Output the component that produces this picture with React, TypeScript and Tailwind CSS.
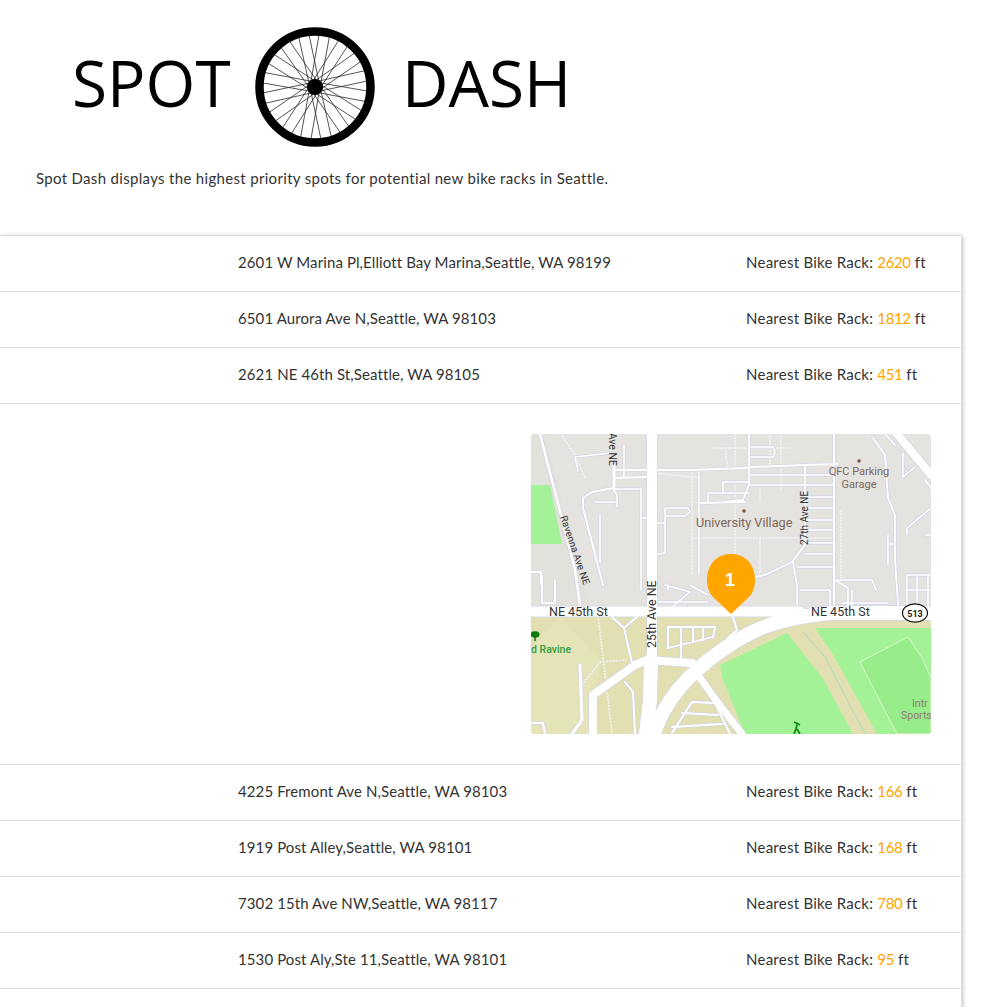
const Raleway = "font-['Lato','Liberation_Sans',sans-serif]";

type Road = [string, number];
const roads: Road[] = [
  ["M540 434L548 465L561 515L575 570L580 605", 2.5],
  ["M575 457L610 453M575 457L578 471", 1.6],
  ["M614 465V488", 3],
  ["M614 470L692 470L745 468L750 467L805 465L838 464", 1.8],
  ["M624 446V477", 1.6],
  ["M614 478L647 477", 1.8],
  ["M613 488L592 492L583 498L583 508L603 585", 2],
  ["M613 488L617 495V507M595 502H617", 1.6],
  ["M600 515V562", 1.6],
  ["M615 489H641V590", 1.6],
  ["M641 518H647M657 523H665", 1.6],
  ["M665 508H688L690 512L685 516H665M665 508V553L657 554", 1.6],
  ["M699 472V575", 1.6],
  ["M700 503L745 502L725 502L743 500L749 485V434", 1.8],
  ["M708 503V493H749M723 492V482H749", 1.6],
  ["M750 447H773L775 452L773 457H750", 1.6],
  ["M749 475H834M749 485H834", 1.6],
  ["M805 465V545L792 562L765 575L755 577", 1.8],
  ["M834 434V605", 2],
  ["M805 497H834M805 508H834M805 520H834M805 530H834M805 543H834M805 554H834", 1.4],
  ["M797 567H833M793 562L797 585V605", 1.6],
  ["M873 438L885 455L888 498L895 515L895 558L898 605", 1.8],
  ["M885 434L895 445M903 453V477L915 467M925 480L931 488", 1.6],
  ["M907 535V528L931 508M925 535H931M888 535V565M888 544H895", 1.6],
  ["M907 575H931M907 575V605M917 575V605M928 575V605", 1.6],
  ["M835 580L848 588V605M835 580H872L876 590M852 590V605", 1.6],
  ["M542 575V603H555V580", 1.8],
  ["M531 572H541V585", 1.8],
  ["M658 602H708M665 585L690 592L672 607M668 590V585M690 585L708 595", 1.6],
  ["M800 590H830V605M842 603H888", 1.6],
  ["M905 590H931", 1.4],
  ["M612 617L624 628L632 663M624 628L638 616", 1.8],
  ["M580 665L582 720L572 734", 3],
  ["M531 723H543L545 734", 2],
  ["M625 682L633 692L635 734", 2],
  ["M668 627H715L713 637L668 648ZM681 627V645M693 627V642M703 627V640M681 645V660", 1.8],
  ["M692 702L715 703M682 713L718 715M672 727L722 724M692 702L672 733M715 703L730 734", 2],
  ["M733 617L737 630L728 638", 2],
  ["M593 734V695L635 665L647 660L692 663", 8],
  ["M698 675L718 703L742 734", 7],
  ["M897 434L931 475", 8],
  ["M652 616V660", 10],
  ["M651 660L650 700L646 734", 14],
  ["M652 427V605", 10],
  ["M531 611.5H800", 10],
  ["M654 734C664 700 690 672 725 648C750 631 775 618 831 613H931", 14],
];

const dots = [
  "M692 472V575", "M692 538H835", "M714 448H725L728 470", "M735 434V470M781 434V490",
  "M585 478L575 455L561 434", "M598 616L612 733", "M582 685L600 662L627 660",
  "M760 538V575M841 510V585", "M735 482V575", "M760 485V500M770 434V465",
  "M655 473L700 478M725 448H790",
];

function MapArt() {
  return (
    <svg viewBox="531 434 400 300" width="400" height="300" className="block">
      <rect x="531" y="434" width="400" height="300" fill="#e5e3df" />
      <path d="M531 434H545L590 605H531Z" fill="#e2e1db" />
      <rect x="531" y="612" width="400" height="122" fill="#e2e0b2" />
      <path d="M560 616L600 660L590 734H531V650Z" fill="#e5e3b8" />
      <path d="M531 485H550L562 544H532L531 544Z" fill="#a3f297" />
      <path d="M720 665L787 633L822 677L853 734H745L722 677Z" fill="#a3f297" />
      <path d="M815 628H931V734H877L832 653Z" fill="#a3f297" />
      <path d="M860 662L908 637L922 658L931 678V734H897Z" fill="#98ed8b" stroke="#eef8e0" strokeWidth="0.8" />
      <path d="M803 632L825 657L865 734" fill="none" stroke="#9fd8c4" strokeWidth="0.8" />
      <g fill="none" strokeLinejoin="round" strokeLinecap="round">
        {dots.map((d, i) => (
          <path key={i} d={d} stroke="#f3f3f7" strokeWidth="1.7" strokeDasharray="2 1.2" strokeLinecap="butt" />
        ))}
        {roads.map(([d, w], i) => (
          <path key={`c${i}`} d={d} stroke="#d4d4e6" strokeWidth={w + 1.4} />
        ))}
        {roads.map(([d, w], i) => (
          <path key={`r${i}`} d={d} stroke="#ffffff" strokeWidth={w} />
        ))}
      </g>
      <g fontFamily="Roboto, sans-serif" fill="#333333" fontSize="12.5">
        <text x="549" y="616">NE 45th St</text>
        <text x="811" y="616">NE 45th St</text>
        <text transform="translate(656 648) rotate(-90)">25th Ave NE</text>
        <text fontSize="10.5" transform="translate(609 466) rotate(90)" textAnchor="end">Ave NE</text>
        <text fontSize="10" transform="translate(560 517) rotate(71)">Ravenna Ave NE</text>
        <text fontSize="10" transform="translate(808 545) rotate(-90)">27th Ave NE</text>
      </g>
      <g fontFamily="Roboto, sans-serif" fill="#7c675a">
        <text x="696" y="527" fontSize="12.7">University Village</text>
        <text x="859" y="475" fontSize="11" textAnchor="middle">QFC Parking</text>
        <text x="859" y="488" fontSize="11" textAnchor="middle">Garage</text>
        <circle cx="744" cy="511" r="1.8" fill="#795548" />
        <circle cx="859" cy="461" r="1.8" fill="#795548" />
        <text x="912" y="707" fontSize="10.5" fill="#8f7a74">Intr</text>
        <text x="901" y="719" fontSize="10.5" fill="#8f7a74">Sports</text>
      </g>
      <text x="531" y="653" fontFamily="Roboto, sans-serif" fontSize="10.5" fontWeight="500" fill="#2f9e44">d Ravine</text>
      <path d="M535 641V637" stroke="#0c7a0c" strokeWidth="1.6" />
      <ellipse cx="535" cy="634.5" rx="4.5" ry="3.2" fill="#0c7a0c" />
      <path d="M794 722L800 725M797 725L796 729L794 734M797 729L800 734" stroke="#0c8a0c" strokeWidth="1.8" fill="none" />
      <circle cx="797" cy="723.5" r="1.1" fill="#0c8a0c" />
      <ellipse cx="915" cy="613" rx="12.5" ry="9.2" fill="#ffffff" stroke="#111111" strokeWidth="1.2" />
      <text x="915" y="616.5" textAnchor="middle" fontFamily="Roboto, sans-serif" fontSize="9" fontWeight="700" fill="#222222">513</text>
      <path d="M731 614L713 597C702 586 705 554 731 554C757 554 760 586 749 597Z" fill="#ffa500" />
      <text x="730" y="586" textAnchor="middle" fontFamily="Liberation Sans, sans-serif" fontSize="18" fontWeight="700" fill="#ffffff">1</text>
    </svg>
  );
}

function Wheel() {
  const n = 32;
  const spokes = Array.from({ length: n }, (_, i) => {
    const a = (i / n) * Math.PI * 2 + 0.08;
    const h = a + (i % 2 ? 0.7 : -0.7);
    return {
      x1: 60 + 7 * Math.cos(h),
      y1: 60 + 7 * Math.sin(h),
      x2: 60 + 54 * Math.cos(a),
      y2: 60 + 54 * Math.sin(a),
    };
  });
  return (
    <svg viewBox="0 0 120 120" width="120" height="120" className="block shrink-0">
      {spokes.map((s, i) => (
        <line key={i} {...s} stroke="#2a2a2a" strokeWidth="0.8" />
      ))}
      <circle cx="60" cy="60" r="55.5" fill="none" stroke="#000000" strokeWidth="8.5" />
      <circle cx="60" cy="60" r="8" fill="#000000" />
    </svg>
  );
}

function Row({ address, dist }: { address: string; dist: string }) {
  return (
    <div className="flex h-14 items-center border-b border-[#dddddd] pb-[2px] pl-[238px] text-[15px] text-[#333333]">
      <div className="w-[508px] shrink-0 tracking-[0.1px]">{address}</div>
      <div className="tracking-[0.25px]">
        Nearest Bike Rack: <span className="tracking-[-0.4px] text-[#ffa500]">{dist}</span> ft
      </div>
    </div>
  );
}

export default function App() {
  return (
    <div className={`h-screen overflow-hidden bg-white ${Raleway}`}>
      <div className="flex items-center pl-[72px] pt-[27px] font-['Open_Sans',sans-serif] text-[64px] leading-[112px] text-black">
        <span className="mb-2 w-[183px]">SPOT</span>
        <Wheel />
        <span className="mb-2 pl-[27px]">DASH</span>
      </div>
      <p className="mt-5 pl-9 text-[15px] leading-[22px] tracking-[0.32px] text-[#333333]">
        Spot Dash displays the highest priority spots for potential new bike racks in Seattle.
      </p>
      <div className="mt-[46px] w-[962px] border-t border-r border-[#dddddd] shadow-[1px_1px_4px_rgba(0,0,0,0.25)]">
        <Row address="2601 W Marina Pl,Elliott Bay Marina,Seattle, WA 98199" dist="2620" />
        <Row address="6501 Aurora Ave N,Seattle, WA 98103" dist="1812" />
        <Row address="2621 NE 46th St,Seattle, WA 98105" dist="451" />
        <div className="border-b border-[#dddddd] pl-[531px] pt-[30px] pb-[30px]">
          <div className="w-[400px] overflow-hidden rounded">
            <MapArt />
          </div>
        </div>
        <Row address="4225 Fremont Ave N,Seattle, WA 98103" dist="166" />
        <Row address="1919 Post Alley,Seattle, WA 98101" dist="168" />
        <Row address="7302 15th Ave NW,Seattle, WA 98117" dist="780" />
        <Row address="1530 Post Aly,Ste 11,Seattle, WA 98101" dist="95" />
        <div className="h-14" />
      </div>
    </div>
  );
}
